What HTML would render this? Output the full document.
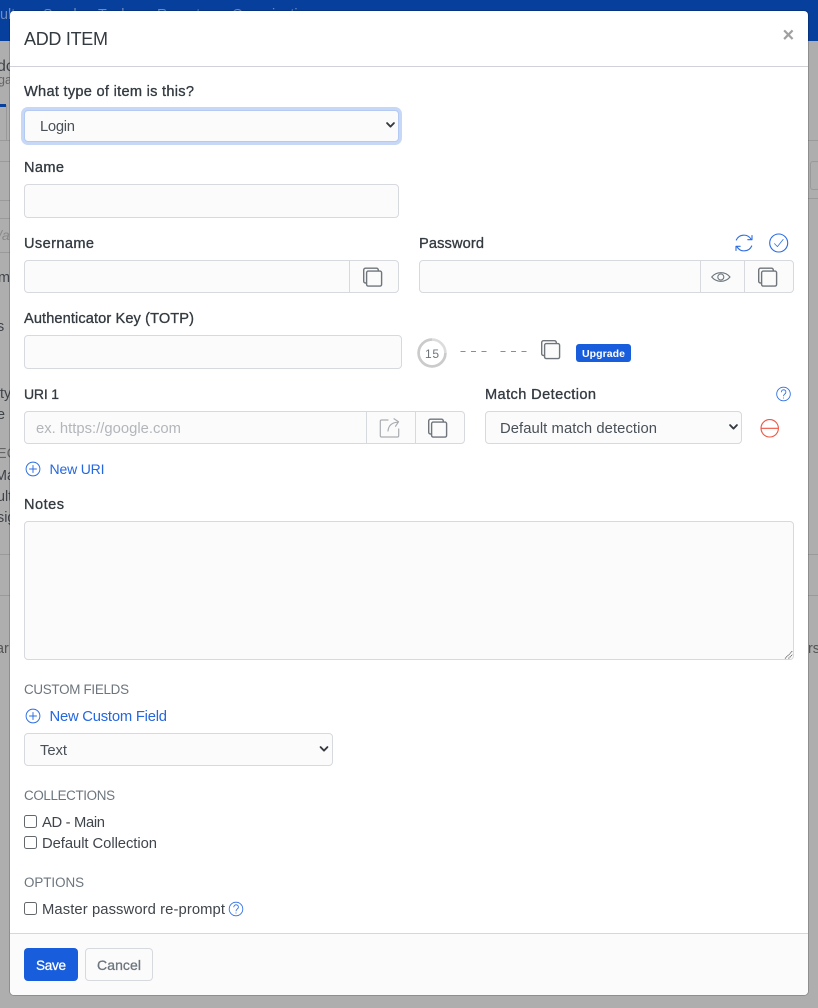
<!DOCTYPE html>
<html lang="en"><head><meta charset="utf-8"><title>Add Item</title>
<style>
html,body{margin:0;padding:0;width:818px;height:1008px;overflow:hidden;background:#aeaeae}
body{position:relative;font-family:"Liberation Sans",sans-serif}
div{position:absolute;box-sizing:border-box}
.top{left:0;top:0;width:818px;height:41px;background:#073f9c}
.ln{background:#9a9a9a;height:1px}
.modal{left:10px;top:11px;width:798px;height:984px;background:#fff;border-radius:4px;box-shadow:0 0 0 1px rgba(0,0,0,.18)}
.foot{left:10px;top:933px;width:798px;height:62px;background:#fbfbfb;border-top:1px solid #d5d7dd;border-radius:0 0 4px 4px}
.hr{left:10px;top:66px;width:798px;height:1px;background:#d0d1d9}
.f{background:#fbfbfb;border:1px solid #d6d9de;border-radius:4px}
.d{width:1px;background:#d6d9de}
.c{width:13px;height:13px;border:1px solid #63686d;border-radius:2.5px;background:#fff}
svg{position:absolute;left:0;top:0}
text{font-family:"Liberation Sans",sans-serif}
.l{font-size:14.6px;fill:#333a40;stroke:#333a40;stroke-width:.32px}
.t{font-size:14.8px;fill:#495057}
.u{font-size:13.4px;fill:#6c757d}
.b{font-size:14.8px;fill:#2467df}
.i{fill:none;stroke-linecap:round;stroke-linejoin:round}
</style></head><body>
<div class="top"></div>
<div class="ln" style="left:0;top:140px;width:10px"></div>
<div class="ln" style="left:0;top:161px;width:10px"></div>
<div class="ln" style="left:0;top:200px;width:10px"></div>
<div class="ln" style="left:0;top:218px;width:10px"></div>
<div class="ln" style="left:0;top:252px;width:10px"></div>
<div class="ln" style="left:0;top:554px;width:10px"></div>
<div class="ln" style="left:0;top:595px;width:10px"></div>
<div class="ln" style="left:808px;top:140px;width:10px"></div>
<div class="ln" style="left:808px;top:198px;width:10px"></div>
<div class="ln" style="left:808px;top:554px;width:10px"></div>
<div class="ln" style="left:808px;top:595px;width:10px"></div>
<div style="left:0;top:104px;width:6px;height:3px;background:#073f9c"></div>
<div style="left:6px;top:105px;width:4px;height:36px;border-left:1px solid #999"></div>
<div style="left:810px;top:161px;width:10px;height:29px;border:1px solid #999;border-radius:3px"></div>
<svg width="818" height="1008" style="z-index:0">
<g font-size="14.4" fill="#3f444a">
<text x="-3" y="71" font-size="16">dc</text>
<text x="-2" y="84" font-size="12.5" fill="#666">ga</text>
<text x="-2" y="240" font-style="italic" fill="#888" font-size="14">/a</text>
<text x="-2" y="282">m</text>
<text x="-3" y="331">s</text>
<text x="0" y="398">ty</text>
<text x="-3" y="419">e</text>
<text x="-3" y="458" fill="#666">EC</text>
<text x="-5" y="480">Ma</text>
<text x="-3" y="501">ult</text>
<text x="-3" y="522">sig</text>
<text x="-4" y="653" fill="#555">ar</text>
<text x="808" y="653" fill="#555">rs</text>
</g>
<g font-size="14.4" fill="#6f8cc4">
<text x="0" y="19">ult</text><text x="43" y="19">Send</text><text x="98" y="19">Tools</text><text x="157" y="19">Reports</text><text x="232" y="19">Organization</text>
</g>
</svg>
<div class="modal"></div>
<div class="hr"></div>
<div class="foot"></div>

<div class="f" style="left:24px;top:110px;width:375px;height:32px;border-color:#b5caf2;box-shadow:0 0 0 3px #c7d8f7"></div>
<div class="f" style="left:24px;top:184px;width:375px;height:34px"></div>
<div class="f" style="left:24px;top:260px;width:375px;height:33px"></div>
<div class="d" style="left:349px;top:260px;height:33px"></div>
<div class="f" style="left:419px;top:260px;width:375px;height:33px"></div>
<div class="d" style="left:700px;top:260px;height:33px"></div>
<div class="d" style="left:744px;top:260px;height:33px"></div>
<div class="f" style="left:24px;top:335px;width:378px;height:34px"></div>
<div class="f" style="left:24px;top:411px;width:441px;height:33px"></div>
<div class="d" style="left:366px;top:411px;height:33px"></div>
<div class="d" style="left:415px;top:411px;height:33px"></div>
<div class="f" style="left:485px;top:411px;width:257px;height:33px"></div>
<div class="f" style="left:24px;top:521px;width:770px;height:139px"></div>
<div class="f" style="left:24px;top:733px;width:309px;height:33px"></div>
<div class="c" style="left:24px;top:815px"></div>
<div class="c" style="left:24px;top:836px"></div>
<div class="c" style="left:24px;top:902px"></div>
<div style="left:24px;top:948px;width:54px;height:33px;background:#175ddc;border-radius:4px"></div>
<div style="left:85px;top:948px;width:68px;height:33px;background:#fbfbfb;border:1px solid #d6d9de;border-radius:4px"></div>
<div style="left:576px;top:344px;width:55px;height:18px;background:#175ddc;border-radius:3px"></div>

<svg width="818" height="1008" viewBox="0 0 818 1008">
<defs>
<g id="copy" class="i" stroke="#6f757b" stroke-width="1.4">
<path d="M3.5 15.5H2.5A1.8 1.8 0 0 1 .7 13.7V2.5A1.8 1.8 0 0 1 2.5 .7H13.5A1.8 1.8 0 0 1 15.3 2.5V3.5"/>
<rect x="3.6" y="3.6" width="15" height="15" rx="1.6" fill="#fbfbfb"/>
</g>
<g id="chev"><path d="M-3.4 -1.9L0 1.6 3.4 -1.9" fill="none" stroke="#343a40" stroke-width="1.9" stroke-linecap="round" stroke-linejoin="round"/></g>
<g id="plus" class="i" stroke="#2a6ce4" stroke-width=".95"><circle r="6.9"/><path d="M-3.5 0H3.5M0 -3.5V3.5"/></g>
<g id="q"><circle r="6.8" fill="none" stroke="#2a6ce4" stroke-width=".85"/><path d="M-2.2 -1.8C-2.2 -5 2.4 -5 2.4 -1.9C2.4 0 0 .2 0 2.2" fill="none" stroke="#2a6ce4" stroke-width=".85"/><circle cy="4" r=".55" fill="#2a6ce4"/></g>
</defs>

<text x="24" y="45" font-size="18" fill="#333a40" textLength="84" lengthAdjust="spacing">ADD ITEM</text>
<text x="782.5" y="41.5" font-size="20" font-weight="700" fill="#a0a0a0">×</text>

<text class="l" x="24" y="96" textLength="170">What type of item is this?</text>
<text class="t" x="40" y="131" textLength="35">Login</text>
<use href="#chev" x="390.5" y="125"/>

<text class="l" x="24" y="172" textLength="40">Name</text>
<text class="l" x="24" y="248" textLength="70">Username</text>
<use href="#copy" x="363" y="267.5"/>
<text class="l" x="419" y="248" textLength="65">Password</text>

<g class="i" stroke="#2a6ce4" stroke-width="1.1">
<path d="M736.3 240A8.3 8.3 0 0 1 751 239.2M751.7 246A8.3 8.3 0 0 1 737 246.8"/>
<path d="M752 235.5V239.7H747.8M736 250.5V246.3H740.2"/>
<circle cx="778.7" cy="243" r="9"/>
<path d="M774.5 243.6L777.4 246.6 783.2 239.4" stroke-width=".75"/>
</g>
<g class="i" stroke="#6c757d" stroke-width="1.1">
<path d="M711.7 277C716.5 271.3 725.3 271.3 730 277C725.3 282.7 716.5 282.7 711.7 277Z"/>
<circle cx="720.8" cy="277" r="3"/>
</g>
<use href="#copy" x="758" y="267.5"/>

<text class="l" x="24" y="323" textLength="170">Authenticator Key (TOTP)</text>
<circle cx="432" cy="353" r="13.4" fill="none" stroke="#dcdcdc" stroke-width="2.6"/>
<path d="M432 339.6A13.4 13.4 0 1 0 445.4 353" fill="none" stroke="#cbcbcb" stroke-width="2.6"/>
<text x="425" y="358" font-size="12" fill="#6c757d" textLength="14">15</text>
<path d="M460.5 351.5h5M471 351.5h5M481.5 351.5h5M500.5 351.5h5M511 351.5h5M521.5 351.5h5" stroke="#868e96" stroke-width="1.1"/>
<use href="#copy" x="541" y="340"/>
<text x="582" y="357" font-size="10.5" font-weight="700" fill="#fff" textLength="43">Upgrade</text>

<text class="l" x="24" y="399" textLength="35" style="font-size:14px">URI 1</text>
<text x="36" y="433" font-size="14.8" fill="#b2b6ba" textLength="145">ex. https://google.com</text>
<g class="i" stroke="#a9adb1" stroke-width="1.2">
<path d="M388 420H381.5A1.2 1.2 0 0 0 380.3 421.2V435.8A1.2 1.2 0 0 0 381.5 437H397.5A1.2 1.2 0 0 0 398.7 435.8V429"/>
<path d="M388 431C388.5 425.5 392 422.7 397.5 422.2M394 418.8L398.5 421.8 395.5 426.3"/>
</g>
<use href="#copy" x="428" y="418.5"/>
<text class="l" x="485" y="399" textLength="111">Match Detection</text>
<use href="#q" x="783.5" y="394"/>
<text class="t" x="500" y="433" textLength="157">Default match detection</text>
<use href="#chev" x="733.5" y="427"/>
<g fill="none" stroke="#ee5544" stroke-width="1.1"><circle cx="769.7" cy="428.3" r="8.7"/><path d="M761 428.3H778.4"/></g>

<use href="#plus" x="33" y="469"/>
<text class="b" x="49.5" y="474" textLength="55" style="font-size:14px">New URI</text>

<text class="l" x="24" y="509" textLength="40">Notes</text>
<path d="M785 658.5L792.5 651M788.5 658.5L792.5 654.5" stroke="#666" stroke-width="1" stroke-dasharray="1.2 .6"/>

<text class="u" x="24" y="694" textLength="105">CUSTOM FIELDS</text>
<use href="#plus" x="33" y="716"/>
<text class="b" x="49.5" y="721" textLength="117.5">New Custom Field</text>
<text class="t" x="40" y="755" textLength="27">Text</text>
<use href="#chev" x="324" y="749"/>

<text class="u" x="24" y="800" textLength="91">COLLECTIONS</text>
<text class="t" x="42" y="827" textLength="63" style="fill:#3f454b">AD - Main</text>
<text class="t" x="42" y="848" textLength="115" style="fill:#3f454b">Default Collection</text>

<text class="u" x="24" y="887" textLength="60">OPTIONS</text>
<text class="t" x="42" y="914" textLength="183" style="fill:#3f454b">Master password re-prompt</text>
<use href="#q" x="236" y="909"/>

<text x="36" y="970" font-size="13.6" fill="#fff" stroke="#fff" stroke-width=".3" textLength="30">Save</text>
<text x="97" y="970" font-size="14" fill="#6c757d" stroke="#6c757d" stroke-width=".3" textLength="44">Cancel</text>
</svg>
</body></html>
